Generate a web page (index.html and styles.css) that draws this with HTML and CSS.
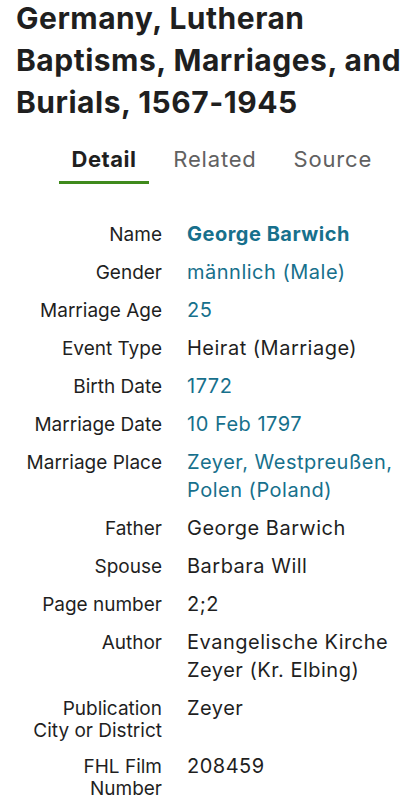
FILE: index.html
```html
<!DOCTYPE html>
<html lang="en">
<head>
<meta charset="utf-8">
<title>Germany, Lutheran Baptisms, Marriages, and Burials, 1567-1945</title>
<link rel="stylesheet" href="styles.css">
</head>
<body>
<main class="page">
  <h1 class="title">Germany, Lutheran Baptisms, Marriages, and Burials, 1567-1945</h1>
  <nav class="tabs">
    <a class="tab tab-active">Detail</a>
    <a class="tab">Related</a>
    <a class="tab">Source</a>
  </nav>
  <dl class="facts">
    <dt>Name</dt><dd><a class="link strong">George Barwich</a></dd>
    <dt>Gender</dt><dd><a class="link">männlich (Male)</a></dd>
    <dt>Marriage Age</dt><dd><a class="link">25</a></dd>
    <dt>Event Type</dt><dd>Heirat (Marriage)</dd>
    <dt>Birth Date</dt><dd><a class="link">1772</a></dd>
    <dt>Marriage Date</dt><dd><a class="link">10 Feb 1797</a></dd>
    <dt>Marriage Place</dt><dd><a class="link">Zeyer, Westpreußen, Polen (Poland)</a></dd>
    <dt>Father</dt><dd>George Barwich</dd>
    <dt>Spouse</dt><dd>Barbara Will</dd>
    <dt>Page number</dt><dd>2;2</dd>
    <dt>Author</dt><dd>Evangelische Kirche Zeyer (Kr. Elbing)</dd>
    <dt>Publication City or District</dt><dd>Zeyer</dd>
    <dt>FHL Film Number</dt><dd>208459</dd>
  </dl>
</main>
</body>
</html>
```
FILE: styles.css
```css
html, body {
  margin: 0;
  padding: 0;
  background: #ffffff;
}
body {
  font-family: Inter, "Open Sans", Arial, sans-serif;
  color: #1f1f1f;
}
.title {
  margin: -3px 0 0;
  padding: 0 14px 0 16px;
  font-size: 30px;
  line-height: 42px;
  font-weight: 700;
  letter-spacing: 0.5px;
  color: #1f1f1f;
}
.tabs {
  display: flex;
  gap: 12px;
  padding-left: 59px;
  margin-top: 24px;
}
.tab {
  font-size: 22px;
  line-height: 24px;
  letter-spacing: 0.8px;
  padding: 0 12.5px 10px;
  color: #616161;
  border-bottom: 3px solid transparent;
}
.tab-active {
  color: #1f1f1f;
  font-weight: 700;
  letter-spacing: 0.5px;
  border-bottom-color: #3f8a1c;
}
.facts {
  display: grid;
  grid-template-columns: 137px 1fr;
  column-gap: 25px;
  row-gap: 10px;
  align-items: baseline;
  margin: 36px 0 0;
  padding: 0 12px 0 25px;
}
.facts dt {
  margin: 0;
  text-align: right;
  font-size: 19px;
  line-height: 22px;
  color: #1f1f1f;
}
.facts dd {
  margin: 0;
  font-size: 20px;
  line-height: 28px;
  letter-spacing: 0.5px;
  color: #1f1f1f;
}
.link {
  color: #17708c;
  text-decoration: none;
}
.strong {
  font-weight: 700;
}
```
